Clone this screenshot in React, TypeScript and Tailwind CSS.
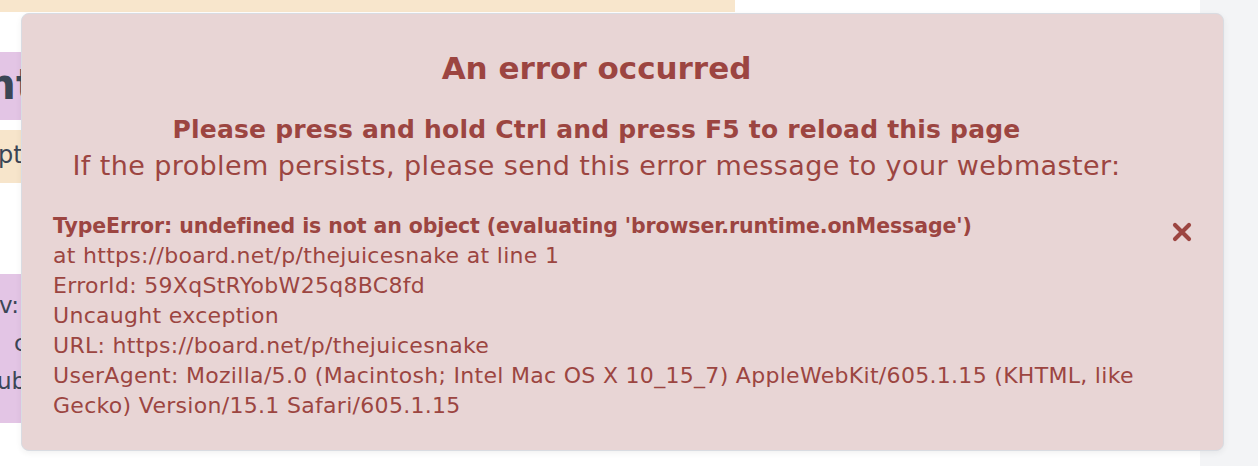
export default function App() {
  const details = [
    "at https://board.net/p/thejuicesnake at line 1",
    "ErrorId: 59XqStRYobW25q8BC8fd",
    "Uncaught exception",
    "URL: https://board.net/p/thejuicesnake",
    "UserAgent: Mozilla/5.0 (Macintosh; Intel Mac OS X 10_15_7) AppleWebKit/605.1.15 (KHTML, like",
    "Gecko) Version/15.1 Safari/605.1.15",
  ];

  return (
    <div className="relative w-full h-[466px] overflow-hidden bg-white font-['DejaVu_Sans',sans-serif]">
      {/* page behind the dialog */}
      <div className="flex h-full">
        <div className="w-[1200px] flex flex-col">
          <div className="w-[735px] h-[12px] bg-[#f8e6cc]" />
          <div className="mt-[40px] w-[400px] h-[68px] bg-[#e3c5e5] overflow-hidden">
            <div className="-ml-[14px] mt-[8px] text-[42px] leading-[50px] font-bold text-[#3b4656] whitespace-nowrap">
              nt
            </div>
          </div>
          <div className="mt-[10px] w-[400px] h-[53px] bg-[#f7e5cb] overflow-hidden">
            <div className="-ml-[2px] mt-[10px] text-[24px] leading-[30px] text-[#3b4656] whitespace-nowrap">
              pt
            </div>
          </div>
          <div className="mt-[91px] w-[400px] h-[149px] bg-[#e3c5e5] overflow-hidden text-[23px] leading-[38px] text-[#3b4656] whitespace-nowrap">
            <div className="-ml-[1px] mt-[12px]">v:</div>
            <div className="ml-[14px]">c</div>
            <div className="-ml-[3px]">ub</div>
          </div>
        </div>
        <div className="flex-1 bg-[#f3f4f6]" />
      </div>

      {/* error dialog */}
      <div className="absolute left-[21px] top-[13px] w-[1203px] h-[438px] flex rounded-[8px] border border-[#d9dce2] bg-[#e8d5d5] shadow-[0_2px_6px_rgba(0,0,0,0.06)] text-[#9c4541]">
        <div className="flex-1 pl-[31px] pt-[34px] flex flex-col">
          <h1 className="text-center text-[31px] leading-[40px] font-bold">
            An error occurred
          </h1>
          <p className="mt-[24px] text-center text-[25px] leading-[36px] font-bold tracking-[0.2px]">
            Please press and hold Ctrl and press F5 to reload this page
          </p>
          <p className="text-center text-[27px] leading-[36px] tracking-[0.4px]">
            If the problem persists, please send this error message to your webmaster:
          </p>
          <div className="mt-[27px] text-[22px] leading-[30px] tracking-[0.3px] whitespace-nowrap">
            <div className="font-bold text-[20.5px] tracking-[-0.1px]">
              TypeError: undefined is not an object (evaluating &apos;browser.runtime.onMessage&apos;)
            </div>
            {details.map((line) => (
              <div key={line}>{line}</div>
            ))}
          </div>
        </div>
        <div className="w-[83px] flex items-center justify-center">
          <button aria-label="Close" className="w-[22px] h-[22px] flex items-center justify-center">
            <svg viewBox="0 0 22 22" className="w-[22px] h-[22px]">
              <path d="M4 4 L18 18 M18 4 L4 18" stroke="#9c4541" strokeWidth="4.2" strokeLinecap="round" fill="none" />
            </svg>
          </button>
        </div>
      </div>
    </div>
  );
}
